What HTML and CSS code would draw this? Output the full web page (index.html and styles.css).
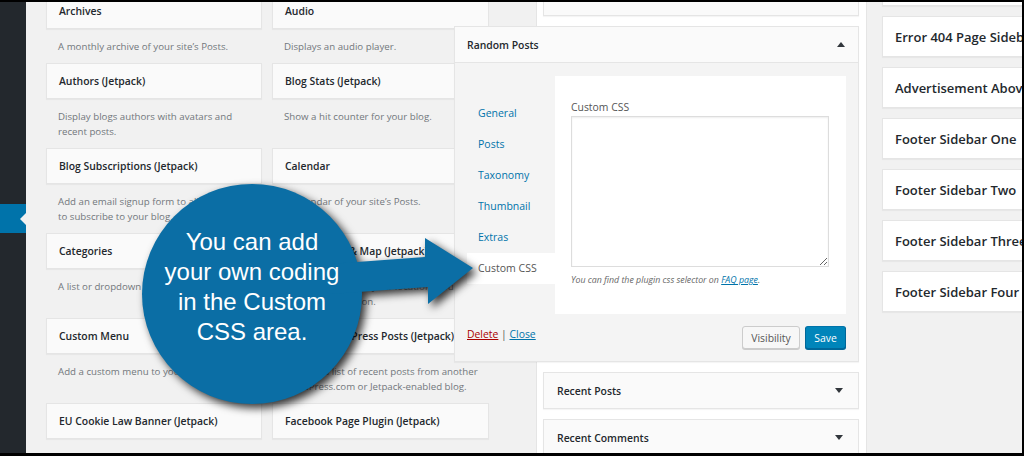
FILE: index.html
```html
<!DOCTYPE html>
<html>
  <head>
    <title>Widgets</title>
    <link rel="stylesheet" href="styles.css">
  </head>
  <body>
    <div class="screen">

      <div class="adminmenu">
        <div class="menu-current"></div>
      </div>

      <!-- available widgets -->
      <div class="available">
        <div class="widget">
          <div class="widget-top">Archives</div>
          <div class="widget-desc">A monthly archive of your site’s Posts.</div>
        </div>
        <div class="widget">
          <div class="widget-top">Audio</div>
          <div class="widget-desc">Displays an audio player.</div>
        </div>
        <div class="widget">
          <div class="widget-top">Authors (Jetpack)</div>
          <div class="widget-desc">Display blogs authors with avatars and<br>recent posts.</div>
        </div>
        <div class="widget">
          <div class="widget-top">Blog Stats (Jetpack)</div>
          <div class="widget-desc">Show a hit counter for your blog.</div>
        </div>
        <div class="widget">
          <div class="widget-top">Blog Subscriptions (Jetpack)</div>
          <div class="widget-desc">Add an email signup form to allow people<br>to subscribe to your blog.</div>
        </div>
        <div class="widget">
          <div class="widget-top">Calendar</div>
          <div class="widget-desc">A calendar of your site’s Posts.</div>
        </div>
        <div class="widget">
          <div class="widget-top">Categories</div>
          <div class="widget-desc">A list or dropdown of categories.</div>
        </div>
        <div class="widget">
          <div class="widget-top">Contact Info &amp; Map (Jetpack)</div>
          <div class="widget-desc">Display a map with your location, hours, and<br>contact information.</div>
        </div>
        <div class="widget">
          <div class="widget-top">Custom Menu</div>
          <div class="widget-desc">Add a custom menu to your sidebar.</div>
        </div>
        <div class="widget">
          <div class="widget-top">Display WordPress Posts (Jetpack)</div>
          <div class="widget-desc">Displays a list of recent posts from another<br>WordPress.com or Jetpack-enabled blog.</div>
        </div>
        <div class="widget">
          <div class="widget-top">EU Cookie Law Banner (Jetpack)</div>
        </div>
        <div class="widget">
          <div class="widget-top">Facebook Page Plugin (Jetpack)</div>
        </div>
      </div>

      <!-- open sidebar -->
      <div class="sidebar-main">
        <div class="widget-bar">Search</div>

        <div class="wide-widget">
          <div class="wide-head">
            <span>Random Posts</span>
            <span class="arrow-up"></span>
          </div>
          <div class="wide-body">
            <ul class="tabs">
              <li class="tab">General</li>
              <li class="tab">Posts</li>
              <li class="tab">Taxonomy</li>
              <li class="tab">Thumbnail</li>
              <li class="tab">Extras</li>
              <li class="tab active">Custom CSS</li>
            </ul>
            <div class="panel">
              <label>Custom CSS</label>
              <textarea></textarea>
              <p class="hint">You can find the plugin css selector on <a href="#">FAQ page</a>.</p>
            </div>
          </div>
          <div class="wide-foot">
            <div class="links">
              <a href="#" class="delete">Delete</a> <span class="sep">|</span> <a href="#" class="close">Close</a>
            </div>
            <button class="button">Visibility</button>
            <button class="button button-primary">Save</button>
          </div>
        </div>

        <div class="widget-bar">Recent Posts <span class="arrow-down"></span></div>
        <div class="widget-bar">Recent Comments <span class="arrow-down"></span></div>
      </div>

      <!-- closed sidebars -->
      <div class="sidebar-side">
        <div class="closed-sidebar"></div>
        <div class="closed-sidebar">Error 404 Page Sidebar</div>
        <div class="closed-sidebar">Advertisement Above Header</div>
        <div class="closed-sidebar">Footer Sidebar One</div>
        <div class="closed-sidebar">Footer Sidebar Two</div>
        <div class="closed-sidebar">Footer Sidebar Three</div>
        <div class="closed-sidebar">Footer Sidebar Four</div>
      </div>
    </div>

    <div class="callout">
      <svg width="345" height="240" viewBox="0 0 345 240">
        <g fill="#0b6ea5">
          <circle cx="117" cy="119" r="110"/>
          <polygon points="195,89 290,82 290,63 338,93 293,129 293,112 195,119"/>
        </g>
      </svg>
      <div class="callout-text">You can add<br>your own coding<br>in the Custom<br>CSS area.</div>
    </div>
  </body>
</html>
```

FILE: styles.css
```css
html, body {
  height: 100%;
}

body {
  margin: 0;
  background: #000;
  overflow: hidden;
  font-family: "Open Sans", "Segoe UI", sans-serif;
  color: #23282d;
}

.screen {
  display: flex;
  height: 451px;
  margin: 2px 2px 0 0;
  background: #f1f1f1;
  overflow: hidden;
}

.adminmenu {
  flex: none;
  width: 26px;
  padding-top: 202px;
  background: #23282d;
}

.menu-current {
  position: relative;
  height: 29px;
  background: #0073aa;
}

.menu-current::after {
  content: "";
  position: absolute;
  right: 0;
  top: 9px;
  border-top: 6px solid transparent;
  border-bottom: 6px solid transparent;
  border-right: 6px solid #f1f1f1;
}

/* available widgets */
.available {
  flex: none;
  display: grid;
  grid-template-columns: 216px 217px;
  column-gap: 10px;
  align-content: start;
  width: 443px;
  margin: -9px 0 0 20px;
}

.widget-top {
  display: flex;
  align-items: center;
  height: 36px;
  box-sizing: border-box;
  padding: 0 12px;
  background: #fafafa;
  border: 1px solid #e5e5e5;
  box-shadow: 0 1px 1px rgba(0,0,0,.04);
  font-size: 10.4px;
  font-weight: 600;
  white-space: nowrap;
  overflow: hidden;
}

.widget-desc {
  padding: 10px 12px 9px;
  font-size: 9.7px;
  line-height: 15px;
  color: #72777c;
  white-space: nowrap;
}

/* open sidebar */
.sidebar-main {
  flex: none;
  width: 331px;
  height: 560px;
  box-sizing: border-box;
  margin: -31px 0 0 47px;
  padding: 7px 7px 0 6px;
  background: #fff;
  border: 1px solid #e5e5e5;
}

.widget-bar {
  display: flex;
  justify-content: space-between;
  align-items: center;
  height: 37px;
  box-sizing: border-box;
  margin-bottom: 10px;
  padding: 0 15px 0 13px;
  background: #fafafa;
  border: 1px solid #e5e5e5;
  box-shadow: 0 1px 1px rgba(0,0,0,.04);
  font-size: 10.4px;
  font-weight: 600;
}

.arrow-down {
  border-left: 4px solid transparent;
  border-right: 4px solid transparent;
  border-top: 5px solid #32373c;
}

.arrow-up {
  border-left: 4px solid transparent;
  border-right: 4px solid transparent;
  border-bottom: 5px solid #32373c;
}

.wide-widget {
  position: relative;
  z-index: 1;
  width: 405px;
  box-sizing: border-box;
  margin: 0 0 10px -89px;
  background: #f4f4f4;
  border: 1px solid #e5e5e5;
  box-shadow: 0 1px 1px rgba(0,0,0,.04);
}

.wide-head {
  display: flex;
  justify-content: space-between;
  align-items: center;
  height: 35px;
  padding: 0 13px 0 12px;
  background: #fafafa;
  border-bottom: 1px solid #e5e5e5;
  font-size: 10.4px;
  font-weight: 600;
}

.wide-body {
  display: flex;
  padding: 13px 12px 0;
}

.tabs {
  width: 88px;
  margin: 0;
  padding: 22px 0 0;
  list-style: none;
}

.tab {
  height: 31px;
  line-height: 31px;
  padding-left: 11px;
  font-size: 10.5px;
  color: #0073aa;
}

.tab.active {
  background: #fff;
  color: #555;
}

.panel {
  width: 291px;
  height: 238px;
  box-sizing: border-box;
  padding: 24px 0 0 16px;
  background: #fff;
}

.panel label {
  display: block;
  margin-bottom: 2px;
  font-size: 10.4px;
  line-height: 14px;
  color: #555;
}

.panel textarea {
  display: block;
  width: 258px;
  height: 151px;
  box-sizing: border-box;
  margin: 0;
  border: 1px solid #ddd;
  box-shadow: inset 0 1px 2px rgba(0,0,0,.07);
  background: #fff;
}

.hint {
  margin: 6px 0 0;
  font-size: 8.8px;
  font-style: italic;
  line-height: 14px;
  color: #666;
}

.hint a {
  color: #0073aa;
}

.wide-foot {
  display: flex;
  align-items: center;
  height: 47px;
  padding: 0 12px;
}

.links {
  flex: 1;
  margin-top: -7px;
  font-size: 10.4px;
}

.links .delete {
  color: #a00;
}

.links .close {
  color: #0073aa;
}

.links .sep {
  color: #555;
}

.button {
  height: 23px;
  box-sizing: border-box;
  padding: 0;
  width: 58px;
  background: #f7f7f7;
  border: 1px solid #ccc;
  border-radius: 3px;
  box-shadow: 0 1px 0 #ccc;
  font-family: inherit;
  font-size: 10.4px;
  color: #555;
}

.button-primary {
  width: 41px;
  margin-left: 5px;
  background: #0085ba;
  border-color: #0073aa #006799 #006799;
  box-shadow: 0 1px 0 #006799;
  color: #fff;
}

/* closed sidebars */
.sidebar-side {
  flex: none;
  width: 220px;
  margin: -37px 0 0 15px;
}

.closed-sidebar {
  display: flex;
  align-items: center;
  height: 41px;
  box-sizing: border-box;
  margin-bottom: 10px;
  padding: 0 12px;
  background: #fff;
  border: 1px solid #e5e5e5;
  box-shadow: 0 1px 1px rgba(0,0,0,.04);
  font-size: 13px;
  font-weight: 600;
  white-space: nowrap;
}

/* callout */
.callout {
  position: absolute;
  left: 135px;
  top: 175px;
  z-index: 2;
  width: 345px;
  height: 240px;
}

.callout svg {
  display: block;
  overflow: visible;
  filter: drop-shadow(4px 4px 4px rgba(0,0,0,.8));
}

.callout-text {
  position: absolute;
  left: 17px;
  top: 52px;
  width: 200px;
  text-align: center;
  font-family: "Liberation Sans", Arial, sans-serif;
  font-size: 24px;
  line-height: 30px;
  color: #fff;
}
```
